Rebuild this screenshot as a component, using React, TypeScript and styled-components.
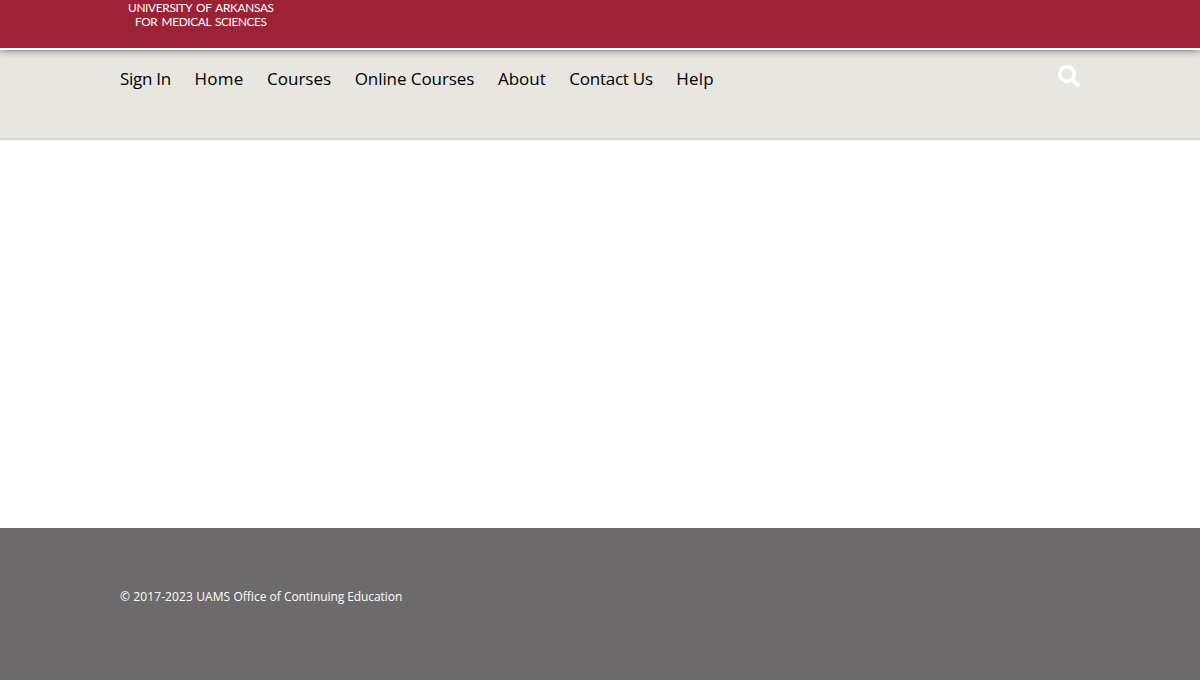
import React from "react";
import styled, { createGlobalStyle } from "styled-components";

const Global = createGlobalStyle`
  *{box-sizing:border-box}
  body{margin:0;background:#fff;font-family:"Open Sans",sans-serif;color:#000}
`;
const Page = styled.div`display:flex;flex-direction:column;height:680px;overflow:hidden;`;
const Banner = styled.header`height:50px;flex:none;background:#9d2235;border-bottom:2px solid #fff;box-shadow:0 0 8px rgba(0,0,0,.6);z-index:1;padding-left:120px;`;
const Logo = styled.svg`display:block;font-family:Lato,sans-serif;font-size:11.8px;word-spacing:1.5px;fill:#fff;`;
const NavBar = styled.nav`height:90px;flex:none;background:#e7e6e0;border-bottom:2px solid #d3d3d0;display:flex;justify-content:space-between;align-items:flex-start;padding:15px 120px 0;`;
const Links = styled.div`display:flex;gap:23.55px;`;
const NavLink = styled.a<{ $tracking: number }>`font-size:17px;line-height:28px;color:#000;white-space:nowrap;letter-spacing:${(p) => p.$tracking}px;`;
const SearchIcon = styled.svg`display:block;`;
const Content = styled.main`flex:1;`;
const Footer = styled.footer`height:152px;flex:none;background:#6d6a6b;color:#fff;padding:60px 120px 0;font-size:12px;line-height:18px;`;
const Tracked = styled.span<{ $tracking: number }>`letter-spacing:${(p) => p.$tracking}px;`;

const links = [
  { label: "Sign In", tracking: -0.28 },
  { label: "Home", tracking: 0.25 },
  { label: "Courses", tracking: 0 },
  { label: "Online Courses", tracking: -0.07 },
  { label: "About", tracking: 0 },
  { label: "Contact Us", tracking: -0.25 },
  { label: "Help", tracking: 0.2 },
];

export default function App() {
  return (
    <Page>
      <Global />
      <Banner>
        <Logo width="164" height="48">
          <text x="8" y="12" textLength="146">UNIVERSITY OF ARKANSAS</text>
          <text x="15" y="26" textLength="132">FOR MEDICAL SCIENCES</text>
        </Logo>
      </Banner>
      <NavBar>
        <Links>
          {links.map((l) => <NavLink key={l.label} $tracking={l.tracking}>{l.label}</NavLink>)}
        </Links>
        <SearchIcon width="22" height="22" viewBox="0 0 512 512" fill="#fff">
          <path stroke="#fff" strokeWidth="8" d="M505 442.7L405.3 343c-4.500-4.500-10.600-7-17-7H372c27.600-35.300 44-79.700 44-128C416 93.100 322.900 0 208 0S0 93.100 0 208s93.100 208 208 208c48.300 0 92.700-16.400 128-44v16.300c0 6.400 2.500 12.500 7 17l99.700 99.700c9.400 9.400 24.600 9.400 33.900 0l28.300-28.300c9.400-9.400 9.400-24.600.1-34zM208 336c-70.700 0-128-57.200-128-128 0-70.700 57.200-128 128-128 70.700 0 128 57.200 128 128 0 70.700-57.200 128-128 128z" />
        </SearchIcon>
      </NavBar>
      <Content />
      <Footer>
        <Tracked $tracking={0.1}>© 2017-2023 UAMS </Tracked>
        <Tracked $tracking={0}>Office of </Tracked>
        <Tracked $tracking={-0.08}>Continuing Education</Tracked>
      </Footer>
    </Page>
  );
}
